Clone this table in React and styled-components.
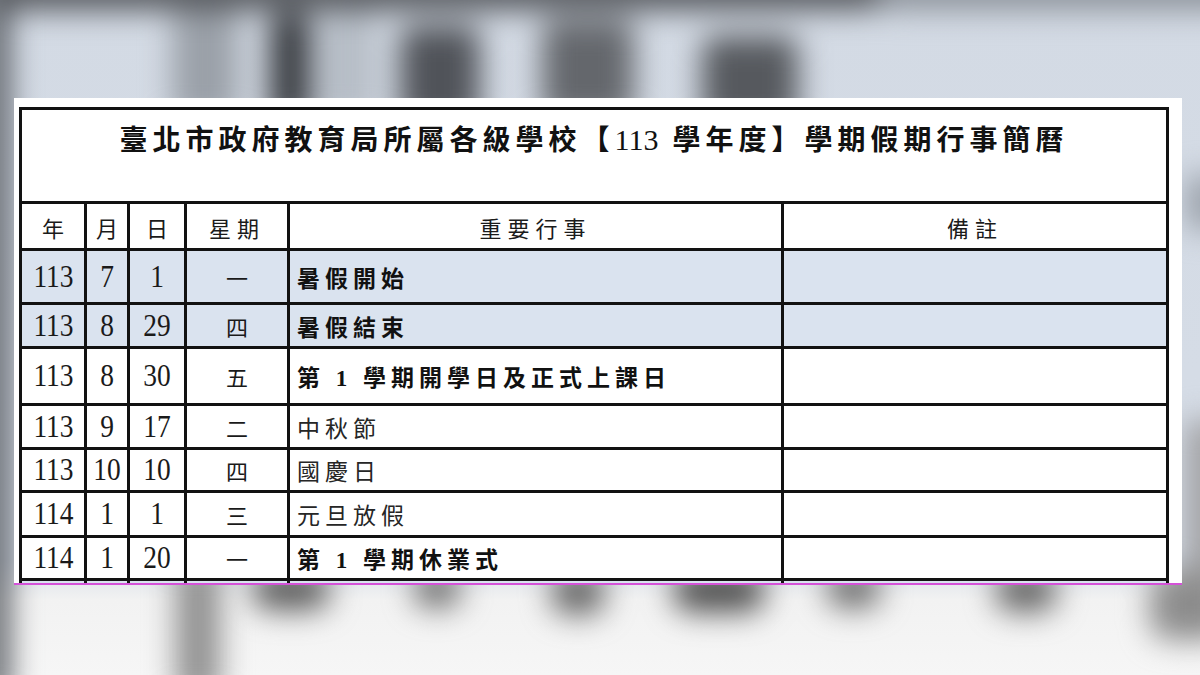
import React from "react";
import styled, { createGlobalStyle } from "styled-components";

const GlobalStyle = createGlobalStyle`
  html, body {
    margin: 0;
    padding: 0;
    background: #d6dde7;
  }
`;

const cjk = `"Noto Sans CJK TC", "Noto Sans CJK SC", sans-serif`;
const serifNum = `"Liberation Serif", "Noto Sans CJK TC", serif`;
const line = "3px solid #121212";
const highlight = "#dae3ef";

const Page = styled.div`
  position: relative;
  width: 1200px;
  height: 675px;
  overflow: hidden;
  box-sizing: border-box;
  padding: 98px 18px 0 14px;
  background: linear-gradient(
    to bottom,
    #d3dae4 0px,
    #d6dde7 560px,
    #f2f2f2 600px,
    #f6f6f6 675px
  );
`;

const Backdrop = styled.div`
  position: absolute;
  inset: 0;
  filter: blur(15px);
`;

const Blob = styled.div`
  position: absolute;
  left: ${(p) => p.$x}px;
  top: ${(p) => p.$y}px;
  width: ${(p) => p.$w}px;
  height: ${(p) => p.$h}px;
  background: ${(p) => p.$c};
  border-radius: ${(p) => p.$r || 20}px;
`;

const Card = styled.div`
  position: relative;
  width: 1168px;
  height: 487px;
  box-sizing: border-box;
  background: #ffffff;
  overflow: hidden;
  padding: 9px 0 0 5px;
  border-bottom: 2px solid #d452d8;
`;

const Table = styled.table`
  width: 1147px;
  border-collapse: collapse;
  table-layout: fixed;
  color: #141414;
`;

const TitleCell = styled.td`
  border: ${line};
  height: 81px;
  vertical-align: top;
  text-align: center;
  padding: 10px 0 0 0;
  font-family: ${serifNum};
  font-size: 28px;
  line-height: 40px;
  font-weight: 700;
  letter-spacing: 5px;
  color: #111;
`;

const Digits = styled.span`
  display: inline-block;
  letter-spacing: 0;
  font-weight: 400;
  font-size: 30px;
  margin-right: 14px;
`;

const HeadCell = styled.td`
  border: ${line};
  text-align: center;
  vertical-align: middle;
  padding: 2px 0 0 0;
  font-family: ${cjk};
  font-size: 22px;
  letter-spacing: ${(p) => (p.$wide ? 6 : 0)}px;
  color: #1b1b1b;
`;

const Row = styled.tr`
  height: ${(p) => p.$h}px;
  background: ${(p) => (p.$hl ? highlight : "#ffffff")};
`;

const NumCell = styled.td`
  border: ${line};
  text-align: center;
  vertical-align: middle;
  padding: 0;
  font-family: ${serifNum};
  font-size: 28px;
  color: #1a1a1a;
`;

const Tall = styled.span`
  display: inline-block;
  transform: scale(0.98, 1.16);
`;

const DayCell = styled.td`
  border: ${line};
  text-align: center;
  vertical-align: middle;
  padding: 0;
  font-family: ${cjk};
  font-size: 22px;
  color: #1a1a1a;
`;

const EventCell = styled.td`
  border: ${line};
  text-align: left;
  vertical-align: middle;
  padding: 0 0 0 7px;
  font-family: ${serifNum};
  font-size: 23px;
  letter-spacing: 5px;
  font-weight: ${(p) => (p.$bold ? 700 : 400)};
  color: ${(p) => (p.$bold ? "#111" : "#262626")};
  white-space: nowrap;
`;

const NoteCell = styled.td`
  border: ${line};
  padding: 0;
`;

const blobs = [
  // top strip and photo shapes above the card
  { x: -20, y: -30, w: 900, h: 40, c: "#55585d", r: 10 },
  { x: 880, y: -30, w: 360, h: 40, c: "#8d939b", r: 10 },
  { x: -20, y: 0, w: 30, h: 700, c: "#5b5f65", r: 6 },
  { x: 172, y: 10, w: 66, h: 110, c: "#9aa0a8", r: 10 },
  { x: 270, y: 14, w: 40, h: 110, c: "#35383d", r: 10 },
  { x: 320, y: 10, w: 56, h: 110, c: "#b6bdc6", r: 10 },
  { x: 400, y: 26, w: 80, h: 100, c: "#505359", r: 14 },
  { x: 542, y: 20, w: 92, h: 100, c: "#64676c", r: 14 },
  { x: 702, y: 36, w: 96, h: 90, c: "#56595e", r: 14 },
  // right edge
  { x: 1186, y: 175, w: 40, h: 55, c: "#9aa1aa", r: 8 },
  { x: 1186, y: 420, w: 40, h: 200, c: "#a0a0a2", r: 8 },
  // shapes below the card
  { x: 176, y: 560, w: 44, h: 140, c: "#8f8f8f", r: 14 },
  { x: 252, y: 570, w: 78, h: 40, c: "#5c5c5c" },
  { x: 413, y: 570, w: 48, h: 38, c: "#6e6e6e" },
  { x: 551, y: 570, w: 54, h: 45, c: "#666666" },
  { x: 673, y: 570, w: 92, h: 42, c: "#4f4f4f" },
  { x: 826, y: 570, w: 55, h: 38, c: "#6c6c6c" },
  { x: 995, y: 570, w: 62, h: 42, c: "#666666" },
  { x: 1150, y: 570, w: 80, h: 70, c: "#8c8c8c" },
];

const rows = [
  { y: "113", m: "7", d: "1", w: "一", e: "暑假開始", bold: true, hl: true, h: 54 },
  { y: "113", m: "8", d: "29", w: "四", e: "暑假結束", bold: true, hl: true, h: 44 },
  { y: "113", m: "8", d: "30", w: "五", e: "第 1 學期開學日及正式上課日", bold: true, h: 57 },
  { y: "113", m: "9", d: "17", w: "二", e: "中秋節", h: 44 },
  { y: "113", m: "10", d: "10", w: "四", e: "國慶日", h: 43 },
  { y: "114", m: "1", d: "1", w: "三", e: "元旦放假", h: 45 },
  { y: "114", m: "1", d: "20", w: "一", e: "第 1 學期休業式", bold: true, h: 43 },
];

export default function App() {
  return (
    <Page>
      <GlobalStyle />
      <Backdrop>
        {blobs.map((b, i) => (
          <Blob key={i} $x={b.x} $y={b.y} $w={b.w} $h={b.h} $c={b.c} $r={b.r} />
        ))}
      </Backdrop>
      <Card>
        <Table>
          <colgroup>
            <col style={{ width: 65 }} />
            <col style={{ width: 43 }} />
            <col style={{ width: 57 }} />
            <col style={{ width: 103 }} />
            <col style={{ width: 494 }} />
            <col style={{ width: 385 }} />
          </colgroup>
          <tbody>
            <tr>
              <TitleCell colSpan={6}>
                臺北市政府教育局所屬各級學校【<Digits>113</Digits>學年度】學期假期行事簡曆
              </TitleCell>
            </tr>
            <Row $h={47}>
              <HeadCell>年</HeadCell>
              <HeadCell>月</HeadCell>
              <HeadCell>日</HeadCell>
              <HeadCell $wide>星期</HeadCell>
              <HeadCell $wide>重要行事</HeadCell>
              <HeadCell $wide>備註</HeadCell>
            </Row>
            {rows.map((r, i) => (
              <Row key={i} $h={r.h} $hl={r.hl}>
                <NumCell>
                  <Tall>{r.y}</Tall>
                </NumCell>
                <NumCell>
                  <Tall>{r.m}</Tall>
                </NumCell>
                <NumCell>
                  <Tall>{r.d}</Tall>
                </NumCell>
                <DayCell>{r.w}</DayCell>
                <EventCell $bold={r.bold}>{r.e}</EventCell>
                <NoteCell />
              </Row>
            ))}
            <Row $h={44} $hl>
              <NumCell />
              <NumCell />
              <NumCell />
              <DayCell />
              <EventCell />
              <NoteCell />
            </Row>
          </tbody>
        </Table>
      </Card>
    </Page>
  );
}
